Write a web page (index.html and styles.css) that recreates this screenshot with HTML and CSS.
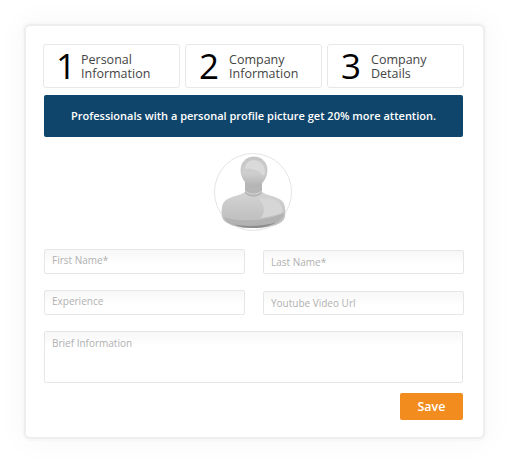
FILE: index.html
```html
<html>
  <head>
    <title>Profile</title>
    <meta http-equiv="Content-Type" content="text/html;charset=UTF-8" />
    <link rel="stylesheet" href="styles.css">
  </head>
  <body>
    <div class="card">
      <!-- steps -->
      <div class="steps">
        <div class="step step-first"><span class="step-num">1</span><span class="step-label">Personal<br>Information</span></div>
        <div class="step"><span class="step-num">2</span><span class="step-label">Company<br>Information</span></div>
        <div class="step"><span class="step-num">3</span><span class="step-label">Company<br>Details</span></div>
      </div>
      <div class="banner">Professionals with a personal profile picture get 20% more attention.</div>
      <!-- avatar -->
      <div class="avatar">
        <svg width="78" height="78" viewBox="0 0 78 78">
          <defs>
            <linearGradient id="head" x1="0" y1="0" x2="0" y2="1">
              <stop offset="0" stop-color="#c6c6c6"/>
              <stop offset="0.55" stop-color="#cecece"/>
              <stop offset="1" stop-color="#b2b2b2"/>
            </linearGradient>
            <linearGradient id="body" x1="0" y1="0" x2="0" y2="1">
              <stop offset="0" stop-color="#d4d4d4"/>
              <stop offset="0.6" stop-color="#c4c4c4"/>
              <stop offset="1" stop-color="#bdbdbd"/>
            </linearGradient>
          </defs>
          <circle cx="39" cy="39" r="38.5" fill="#fff" stroke="#e4e4e4"/>
          <!-- shoulders -->
          <path d="M8 64 C7 56 8 50 12 47 C17 43 25 43 31 39 L48 39 C54 43 62 43 67 47 C71 50 72 56 71 64 C69 71 58 75 39 75 C22 75 10 71 8 64 Z" fill="url(#body)"/>
          <path d="M45 46 C55 44 64 47 67 52 C69 55 69 58 68 60 C62 62 54 64 47 65 C52 58 50 51 45 46 Z" fill="#d6d6d6"/>
          <path d="M10 64 C24 69 50 69 70 60 C70 67 58 75 39 75 C22 75 12 71 10 64 Z" fill="#b2b2b2"/>
          <path d="M20 71.5 C32 74 50 73 62 69.5 C54 74 46 75 39 75 C31 75 25 74 20 71.5 Z" fill="#8d8d8d"/>
          <!-- neck -->
          <path d="M31 29 L48 29 L48 40 C44 45 35 45 31 40 Z" fill="#b6b6b6"/>
          <path d="M31 38 C35 42 44 42 48 38" fill="none" stroke="#d6d6d6"/>
          <!-- head -->
          <path d="M40 4 C48 4 53 10 53 17 C53 25 47 34 40 34 C33 34 27 25 27 17 C27 10 32 4 40 4 Z" fill="url(#head)" stroke="#b4b4b4" stroke-width="0.6"/>
          <path d="M34 9 C38 6 46 7 49 12 C51 16 51 20 50 23 C45 17 37 15 31 16 C31 13 32 11 34 9 Z" fill="#dadada"/>
        </svg>
      </div>
      <!-- form -->
      <div class="fields">
        <div class="col">
          <input class="field" placeholder="First Name*">
          <input class="field" placeholder="Experience">
        </div>
        <div class="col col-right">
          <input class="field" placeholder="Last Name*">
          <input class="field" placeholder="Youtube Video Url">
        </div>
      </div>
      <textarea class="field field-area" placeholder="Brief Information"></textarea>
      <div class="actions"><button class="save">Save</button></div>
    </div>
  </body>
</html>
```

FILE: styles.css
```css
html, body {
  margin: 0;
  background: #fff;
}

body {
  padding: 24px;
  width: 460px;
  font-family: "Open Sans", "Liberation Sans", sans-serif;
}

.card {
  box-sizing: border-box;
  width: 461px;
  height: 415px;
  padding: 18px 20px 0 17px;
  background: #fff;
  border: 2px solid #eee;
  border-radius: 6px;
  box-shadow: 0 0 0 2px #f8f8f8, 0 0 30px 4px rgba(0, 0, 0, 0.03);
}

.steps {
  display: flex;
  gap: 5px;
  width: 422px;
}

.step {
  box-sizing: border-box;
  width: 137px;
  height: 44px;
  display: flex;
  align-items: center;
  padding-left: 13px;
  border: 1px solid #e8e8e8;
  border-radius: 3px;
}

.step-num {
  margin-right: 10px;
  font-size: 35px;
  font-weight: 500;
  line-height: 44px;
  color: #000;
}

.step-first .step-num {
  margin: 0 5px 0 -1px;
}

.step-label {
  margin-top: 2px;
  font-size: 12.5px;
  line-height: 14px;
  color: #444;
}

.banner {
  margin: 7px 0 0 1px;
  width: 419px;
  height: 42px;
  line-height: 42px;
  text-align: center;
  background: #0f456b;
  border-radius: 2px;
  color: #fff;
  font-size: 11px;
  font-weight: 600;
}

.avatar {
  height: 78px;
  margin: 16px 0 0 -1px;
  display: flex;
  justify-content: center;
}

.fields {
  display: flex;
  gap: 18px;
  margin: 18px 0 0 1px;
}

.col {
  display: flex;
  flex-direction: column;
  gap: 16px;
}

.col-right {
  padding-top: 1px;
  gap: 17px;
}

.col-right .field {
  height: 24px;
  padding-bottom: 0;
}

.field {
  box-sizing: border-box;
  display: block;
  width: 201px;
  height: 25px;
  padding: 0 7px 3px;
  border: 1px solid #e6e6e6;
  border-radius: 2px;
  background: linear-gradient(#f7f7f7, #fff 14px);
  font-family: "Open Sans", "Liberation Sans", sans-serif;
  font-size: 10px;
  outline: none;
}

.field::placeholder {
  color: #b0b0b0;
  opacity: 1;
}

.field-area {
  width: 419px;
  height: 52px;
  margin: 16px 0 0 1px;
  padding: 4px 7px;
  resize: none;
}

.actions {
  display: flex;
  justify-content: flex-end;
  margin: 10px 0 0;
}

.save {
  width: 63px;
  height: 27px;
  border: 0;
  border-radius: 2px;
  background: #f28c1e;
  color: #fff;
  font-family: "Open Sans", "Liberation Sans", sans-serif;
  font-size: 12.5px;
  font-weight: 600;
  padding: 0;
}
```
